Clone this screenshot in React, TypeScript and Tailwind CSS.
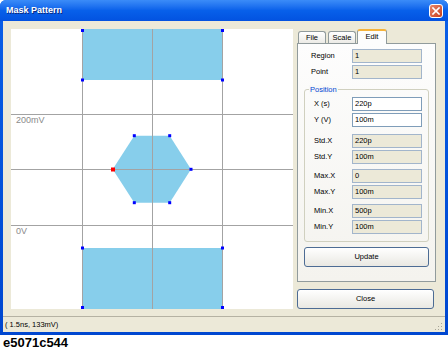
import React from "react";

const F = { fontFamily: '"Liberation Sans", Arial, sans-serif' } as const;

function Box({ value, editable }: { value: string; editable?: boolean }) {
  return (
    <div
      className={
        "w-[70px] h-[14px] border flex items-center pl-[2px] text-[7.5px] leading-none text-black " +
        (editable ? "bg-white border-[#7f9db9]" : "bg-[#ece9d8] border-[#a2b5cb]")
      }
    >
      {value}
    </div>
  );
}

function Row({ label, value, editable, lw, mt }: { label: string; value: string; editable?: boolean; lw: string; mt: string }) {
  return (
    <div className={"flex items-center " + mt}>
      <div className={"text-[7.5px] leading-none text-black " + lw}>{label}</div>
      <Box value={value} editable={editable} />
    </div>
  );
}

function Chart() {
  const blue = "#0000ff";
  const m = (x: number, y: number, k: string) => (
    <rect key={k} x={x - 1.5} y={y - 1.5} width={3} height={3} fill={blue} />
  );
  const hex = [
    [123.3, 106.7],
    [158.7, 106.7],
    [180, 140.3],
    [158.7, 173.7],
    [123.3, 173.7],
    [101.7, 140.3],
  ];
  return (
    <div className="w-[282px] h-[280px] bg-white shrink-0">
      <svg width="282" height="280" viewBox="0 0 282 280">
        <rect x="71" y="0" width="140" height="51" fill="#87ceeb" />
        <polygon points={hex.map((p) => p.join(",")).join(" ")} fill="#87ceeb" />
        <rect x="71" y="219" width="140" height="61" fill="#87ceeb" />
        <g stroke="#a3a3a3" strokeWidth="1">
          <line x1="71.5" y1="0" x2="71.5" y2="280" />
          <line x1="141.5" y1="0" x2="141.5" y2="280" />
          <line x1="211.5" y1="0" x2="211.5" y2="280" />
          <line x1="0" y1="85.5" x2="282" y2="85.5" />
          <line x1="0" y1="140.5" x2="282" y2="140.5" />
          <line x1="0" y1="196.5" x2="282" y2="196.5" />
        </g>
        <text x="5" y="93.5" fontSize="9" fill="#8a8a8a" style={F}>200mV</text>
        <text x="5" y="204.7" fontSize="9" fill="#8a8a8a" style={F}>0V</text>
        {m(71.5, 1.5, "a")}
        {m(211.5, 1.5, "b")}
        {m(71.5, 51, "c")}
        {m(211.5, 51, "d")}
        {hex.slice(0, 5).map((p, i) => m(p[0], p[1], "h" + i))}
        <rect x="100" y="138.5" width="4" height="4" fill="#ff0000" />
        {m(71.5, 219, "e")}
        {m(211.5, 219, "f")}
        {m(71.5, 278.5, "g")}
        {m(211.5, 278.5, "h")}
      </svg>
    </div>
  );
}

export default function App() {
  return (
    <div className="w-[448px] h-[350px] bg-white overflow-hidden" style={F}>
      <div className="w-[448px] h-[335px] flex flex-col rounded-t-[6px] overflow-hidden bg-gradient-to-b from-[#0a5fe8] to-[#0047d0]">
        {/* Title bar */}
        <div className="h-[21px] shrink-0 flex items-center pl-[6px] pr-[5px] bg-gradient-to-b from-[#3b8cf8] via-[#0860ea] to-[#0352e0]">
          <div className="text-[9px] font-bold text-white leading-none [text-shadow:1px_1px_0_#0a2a80]">Mask Pattern</div>
          <div className="ml-auto w-[14px] h-[14px] rounded-[3px] border border-white bg-gradient-to-br from-[#e8866a] to-[#c63d16] flex items-center justify-center">
            <svg width="8" height="8" viewBox="0 0 8 8">
              <path d="M1 1 L7 7 M7 1 L1 7" stroke="white" strokeWidth="1.6" strokeLinecap="square" />
            </svg>
          </div>
        </div>
        {/* Body */}
        <div className="flex-1 mx-[3px] mb-[3px] bg-[#ece9d8] flex flex-col">
          <div className="flex pt-[8px] pl-[8px] flex-1">
            <Chart />
            <div className="ml-[4px] w-[139px] flex flex-col">
              {/* Tabs */}
              <div className="h-[14px] flex items-end relative z-10 text-[7.5px] leading-none text-black">
                <div className="ml-[1px] w-[28px] h-[12px] border border-b-0 border-[#919b9c] rounded-t-[3px] bg-gradient-to-b from-white to-[#ecebe6] flex items-center justify-center">File</div>
                <div className="ml-[2px] w-[28px] h-[12px] border border-b-0 border-[#919b9c] rounded-t-[3px] bg-gradient-to-b from-white to-[#ecebe6] flex items-center justify-center">Scale</div>
                <div className="ml-[1px] w-[30px] h-[15px] -mb-[1px] border-x border-[#919b9c] border-t-[2px] border-t-[#f5b33c] rounded-t-[3px] bg-[#fdfdfd] flex items-center justify-center pb-[2px]">Edit</div>
              </div>
              {/* Panel */}
              <div className="h-[239px] border border-[#919b9c] bg-gradient-to-b from-[#fdfdfd] to-[#f4f3ee] flex flex-col pt-[5px]">
                <div className="pl-[13px]">
                  <Row label="Region" value="1" lw="w-[41px]" mt="" />
                  <Row label="Point" value="1" lw="w-[41px]" mt="mt-[2px]" />
                </div>
                <div className="ml-[6px] w-[125px] mt-[10px] border border-[#d0d0bf] rounded-[3px] pl-[9px] pb-[7px]">
                  <div className="-mt-[5px] -ml-[5px] w-fit px-[1px] h-[9px] bg-[#f9f9f7] text-[7.5px] leading-[9px] text-[#0046d5]">Position</div>
                  <Row label="X (s)" value="220p" editable lw="w-[38px]" mt="mt-[3px]" />
                  <Row label="Y (V)" value="100m" editable lw="w-[38px]" mt="mt-[2px]" />
                  <Row label="Std.X" value="220p" lw="w-[38px]" mt="mt-[7px]" />
                  <Row label="Std.Y" value="100m" lw="w-[38px]" mt="mt-[2px]" />
                  <Row label="Max.X" value="0" lw="w-[38px]" mt="mt-[5px]" />
                  <Row label="Max.Y" value="100m" lw="w-[38px]" mt="mt-[2px]" />
                  <Row label="Min.X" value="500p" lw="w-[38px]" mt="mt-[5px]" />
                  <Row label="Min.Y" value="100m" lw="w-[38px]" mt="mt-[2px]" />
                </div>
                <div className="ml-[6px] mt-[5px] w-[125px] h-[20px] rounded-[3px] border border-[#4d6c94] bg-gradient-to-b from-white to-[#e9e8e2] flex items-center justify-center text-[7.5px] leading-none text-black">Update</div>
              </div>
              <div className="mt-[7px] w-[137px] h-[20px] rounded-[3px] border border-[#4d6c94] bg-gradient-to-b from-white to-[#e9e8e2] flex items-center justify-center text-[7.5px] leading-none text-black">Close</div>
            </div>
          </div>
          {/* Status bar */}
          <div className="h-[16px] shrink-0 border-t border-[#b5b2a3] flex items-center pl-[2px] pr-[2px]">
            <div className="text-[7.5px] leading-none text-black">( 1.5ns, 133mV)</div>
            <svg className="ml-auto self-end mb-[1px]" width="8" height="8" viewBox="0 0 8 8">
              <g fill="#a8a597">
                <rect x="6" y="0" width="1" height="1" />
                <rect x="3" y="3" width="1" height="1" />
                <rect x="6" y="3" width="1" height="1" />
                <rect x="0" y="6" width="1" height="1" />
                <rect x="3" y="6" width="1" height="1" />
                <rect x="6" y="6" width="1" height="1" />
              </g>
            </svg>
          </div>
        </div>
      </div>
      <div className="pl-[3px] text-[13px] leading-[15px] font-bold text-black">e5071c544</div>
    </div>
  );
}
